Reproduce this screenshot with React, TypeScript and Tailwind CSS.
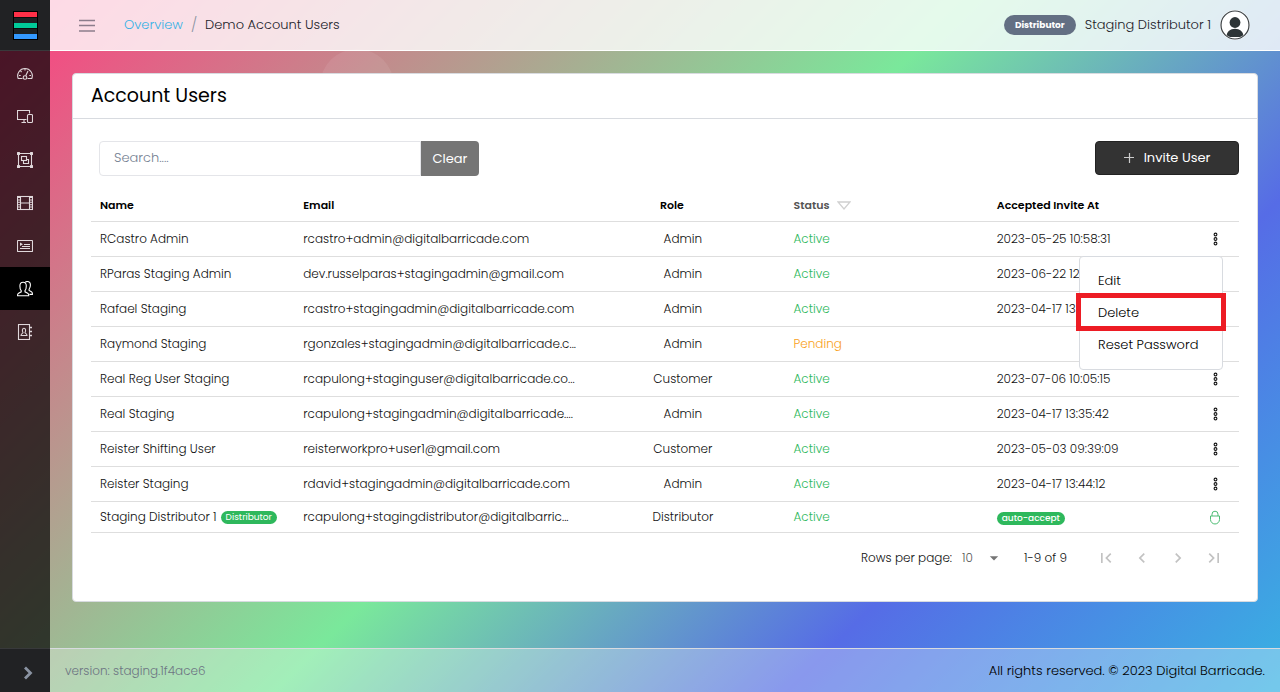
import { useState } from "react";
import type { ReactNode } from "react";
import {
  MdArrowDropDown,
  MdChevronLeft,
  MdChevronRight,
  MdFirstPage,
  MdLastPage,
} from "react-icons/md";

type User = {
  name: string;
  badge?: string;
  email: string;
  role: string;
  status: "Active" | "Pending";
  accepted?: string;
  autoAccept?: boolean;
};

const users: User[] = [
  { name: "RCastro Admin", email: "rcastro+admin@digitalbarricade.com", role: "Admin", status: "Active", accepted: "2023-05-25 10:58:31" },
  { name: "RParas Staging Admin", email: "dev.russelparas+stagingadmin@gmail.com", role: "Admin", status: "Active", accepted: "2023-06-22 12" },
  { name: "Rafael Staging", email: "rcastro+stagingadmin@digitalbarricade.com", role: "Admin", status: "Active", accepted: "2023-04-17 13" },
  { name: "Raymond Staging", email: "rgonzales+stagingadmin@digitalbarricade.c...", role: "Admin", status: "Pending" },
  { name: "Real Reg User Staging", email: "rcapulong+staginguser@digitalbarricade.co...", role: "Customer", status: "Active", accepted: "2023-07-06 10:05:15" },
  { name: "Real Staging", email: "rcapulong+stagingadmin@digitalbarricade....", role: "Admin", status: "Active", accepted: "2023-04-17 13:35:42" },
  { name: "Reister Shifting User", email: "reisterworkpro+user1@gmail.com", role: "Customer", status: "Active", accepted: "2023-05-03 09:39:09" },
  { name: "Reister Staging", email: "rdavid+stagingadmin@digitalbarricade.com", role: "Admin", status: "Active", accepted: "2023-04-17 13:44:12" },
  { name: "Staging Distributor 1", badge: "Distributor", email: "rcapulong+stagingdistributor@digitalbarric...", role: "Distributor", status: "Active", autoAccept: true },
];

function Glyph({ children }: { children: ReactNode }) {
  return (
    <svg viewBox="0 0 16 16" className="size-4" fill="none" stroke="currentColor" strokeWidth="1.1" aria-hidden="true">
      {children}
    </svg>
  );
}

const navItems: { label: string; active?: boolean; icon: ReactNode }[] = [
  {
    label: "Dashboard",
    icon: (
      <Glyph>
        <path d="M5.500 12.500H1.200A7.300 7.300 0 1 1 14.800 12.500H10.500" />
        <circle cx="8" cy="11.500" r="1.800" />
        <path d="M8.700 9.800 11 5M8 2.800v1.700M3.600 5l1 1M2 9.500h1.700M12.300 9.500H14" />
      </Glyph>
    ),
  },
  {
    label: "Devices",
    icon: (
      <Glyph>
        <path d="M9.500 10.500H.5v-9h12v3M4.500 13.500H9M7 10.500v3" />
        <rect x="10.500" y="5.500" width="5" height="8" rx="1" />
      </Glyph>
    ),
  },
  {
    label: "Groups",
    icon: (
      <Glyph>
        <path d="M2.500 1.500h11M2.500 14.500h11M1.500 2.500v11M14.500 2.500v11" />
        <g fill="currentColor" stroke="none">
          <rect x="0" y="0" width="3" height="3" rx=".5" />
          <rect x="13" y="0" width="3" height="3" rx=".5" />
          <rect x="0" y="13" width="3" height="3" rx=".5" />
          <rect x="13" y="13" width="3" height="3" rx=".5" />
        </g>
        <rect x="4.500" y="4.500" width="5" height="4" />
        <path d="M9.500 7.500h2v4h-5v-3" />
      </Glyph>
    ),
  },
  {
    label: "Media",
    icon: (
      <Glyph>
        <rect x=".5" y="1.500" width="15" height="13" />
        <path d="M3.500 1.500v13M12.500 1.500v13M3.500 8h9" />
        <path d="M2 2v12M14 2v12" strokeWidth="2" strokeDasharray="1 1.400" />
      </Glyph>
    ),
  },
  {
    label: "Playlists",
    icon: (
      <Glyph>
        <rect x=".5" y="2.500" width="15" height="11" rx=".5" />
        <path d="M3 4.500v3.600L6 6.300z" fill="currentColor" stroke="none" />
        <path d="M7 6.500h6M5 8.500h8M3 10.500h10" />
      </Glyph>
    ),
  },
  {
    label: "Users",
    active: true,
    icon: (
      <Glyph>
        <path d="M4.200 9.600C3.200 8.300 2.900 6.600 2.900 4.900 2.900 2.600 4.200 1.200 6.100 1.200S9.300 2.600 9.300 4.900c0 1.700-.3 3.400-1.300 4.700v1.200l2.700 1.400c.7.400 1 .9 1 1.600v1H.6v-1c0-.7.3-1.200 1-1.600l2.600-1.400z" />
        <path d="M8.300 1.200C9 .7 9.600.5 10.300.5c1.900 0 3.100 1.300 3.100 3.500 0 1.700-.4 3-1.300 4.300v1.200l2.300 1.300c.7.400 1 .9 1 1.600v1h-3" />
      </Glyph>
    ),
  },
  {
    label: "Contacts",
    icon: (
      <Glyph>
        <rect x="1.500" y=".5" width="11" height="15" />
        <path d="M12 3.500h3M12 7.500h3M12 11.500h3" strokeWidth="1.600" />
        <path d="M6 8.500C5 7 5.200 4.300 7 4.300S9 7 8 8.500c0 1 2 .8 2 3H4c0-2.200 2-2 2-3z" />
      </Glyph>
    ),
  },
];

function Sidebar() {
  return (
    <aside className="flex w-[50px] shrink-0 flex-col bg-black/70">
      <a href="#home" aria-label="Digital Barricade home" className="flex h-[51px] items-center justify-center border-b border-[#38393b] bg-[#212224]">
        <svg viewBox="0 0 25 29" className="h-[29px] w-[25px]" aria-hidden="true">
          <rect width="25" height="29" fill="#000" />
          <rect x="1" y="1" width="23" height="27" fill="#1c2224" />
          <rect x="1" y="1" width="23" height="5" fill="#ff3048" />
          <rect x="1" y="6" width="23" height="1" fill="#0c0c0c" />
          <rect x="1" y="12" width="23" height="5" fill="#00cb99" />
          <rect x="1" y="17" width="23" height="1" fill="#0c0c0c" />
          <rect x="1" y="23" width="23" height="5" fill="#3399ff" />
        </svg>
      </a>
      <nav className="flex flex-1 flex-col pt-px text-[#e0d8db]">
        {navItems.map((item) => (
          <a
            key={item.label}
            href={"#" + item.label.toLowerCase()}
            aria-label={item.label}
            className={
              item.active
                ? "flex h-[43px] items-center justify-center bg-black text-white"
                : "flex h-[43px] items-center justify-center"
            }
          >
            {item.icon}
          </a>
        ))}
      </nav>
      <button type="button" aria-label="Expand sidebar" className="flex h-11 items-center justify-center border-t border-[#38393b] bg-[#212224] pl-1.5 pt-1">
        <svg viewBox="0 0 10 14" className="h-3.5 w-2.5" fill="none" stroke="#8a93a2" strokeWidth="2.800" aria-hidden="true">
          <path d="M2 1.500 7.500 7 2 12.500" />
        </svg>
      </button>
    </aside>
  );
}

function Header() {
  return (
    <header className="flex h-[51px] items-center border-b border-white bg-white/80 pl-[29px] pr-[30px]">
      <button type="button" aria-label="Toggle menu" className="mr-[29px]">
        <svg viewBox="0 0 16 14" className="h-3.5 w-4" stroke="#8c7d8c" strokeWidth="1.300" aria-hidden="true">
          <path d="M0 2.500h16M0 7.500h16M0 13h16" />
        </svg>
      </button>
      <nav aria-label="Breadcrumb" className="flex items-center gap-2 text-[13px]">
        <a href="#overview" className="text-[#39b2e5]">Overview</a>
        <span className="text-sm text-[#8a93a2]">/</span>
        <span className="text-[#22222a]">Demo Account Users</span>
      </nav>
      <div className="ml-auto flex items-center gap-[9px]">
        <span className="rounded-full bg-[#636f83] px-[11px] text-[9px] font-bold leading-5 text-white">Distributor</span>
        <span className="text-[13px] text-[#22222a]">Staging Distributor 1</span>
        <svg viewBox="0 0 30 30" className="size-[30px]" aria-hidden="true">
          <defs>
            <clipPath id="face"><circle cx="15" cy="15" r="13" /></clipPath>
          </defs>
          <circle cx="15" cy="15" r="15" fill="#fff" />
          <circle cx="15" cy="15" r="14" fill="#fff" stroke="#3b4043" strokeWidth="1.200" />
          <g clipPath="url(#face)" fill="#2d3436">
            <circle cx="15" cy="12.500" r="5.400" />
            <path d="M6.500 27c0-5.500 3.800-8.200 8.500-8.200s8.500 2.700 8.500 8.200z" />
          </g>
        </svg>
      </div>
    </header>
  );
}

function Dots() {
  return (
    <svg viewBox="0 0 5 15" className="h-[15px] w-[5px]" fill="none" stroke="#111" strokeWidth="1.100" aria-hidden="true">
      <circle cx="2.500" cy="2.500" r="1.400" />
      <circle cx="2.500" cy="7" r="1.400" />
      <circle cx="2.500" cy="11.500" r="1.400" />
    </svg>
  );
}

function RowMenu() {
  return (
    <ul className="absolute right-4 top-full z-10 w-36 rounded border border-[#d8dbe0] bg-white py-2 text-[13px] text-black">
      <li>
        <button type="button" className="block h-8 w-full px-[18px] text-left">Edit</button>
      </li>
      <li className="relative">
        <button type="button" className="block h-8 w-full px-[18px] text-left">Delete</button>
        <span className="pointer-events-none absolute -inset-x-1 -bottom-0.5 -top-1 border-[5px] border-[#ed1c24]" />
      </li>
      <li>
        <button type="button" className="block h-8 w-full px-[18px] text-left">Reset Password</button>
      </li>
    </ul>
  );
}

function UsersTable() {
  const [openRow] = useState(0);
  return (
    <table className="w-full table-fixed border-separate border-spacing-0 text-left text-xs text-[#111]">
      <colgroup>
        <col />
        <col className="w-1/4" />
        <col />
        <col />
        <col />
        <col className="w-12" />
      </colgroup>
      <thead>
        <tr className="h-8 text-[11px] text-black [&>th]:border-b [&>th]:border-[#dedede] [&>th]:px-[9px] [&>th]:font-semibold">
          <th scope="col">Name</th>
          <th scope="col">Email</th>
          <th scope="col" className="text-center"><span className="pr-[22px]">Role</span></th>
          <th scope="col" className="text-[#555]">
            <button type="button" className="flex items-center gap-2 font-semibold">
              Status
              <svg viewBox="0 0 14 9" className="h-[9px] w-3.5" fill="none" stroke="#d0d0d0" strokeWidth="1.300" aria-hidden="true">
                <path d="M1 1h12L7 8z" />
              </svg>
            </button>
          </th>
          <th scope="col">Accepted Invite At</th>
          <th aria-label="Actions" />
        </tr>
      </thead>
      <tbody>
        {users.map((user, index) => (
          <tr
            key={user.name}
            className={
              user.autoAccept
                ? "h-[31px] [&>td]:border-b [&>td]:border-[#dedede] [&>td]:px-[9px]"
                : "h-[35px] [&>td]:border-b [&>td]:border-[#dedede] [&>td]:px-[9px]"
            }
          >
            <td className="whitespace-nowrap">
              <span className="flex items-center gap-1">
                {user.name}
                {user.badge && (
                  <span className="rounded-full bg-[#2eb85c] px-[5px] text-[9px] font-normal leading-[13px] text-white">{user.badge}</span>
                )}
              </span>
            </td>
            <td className="whitespace-nowrap">{user.email}</td>
            <td className="text-center">{user.role}</td>
            <td className={user.status === "Active" ? "text-[#2eb85c]" : "text-[#f9a11c]"}>{user.status}</td>
            <td className="whitespace-nowrap">
              {user.autoAccept ? (
                <span className="inline-block rounded-full bg-[#2eb85c] px-[5px] text-[9px] font-medium leading-[13px] text-white">auto-accept</span>
              ) : (
                user.accepted
              )}
            </td>
            <td className="relative">
              {user.autoAccept ? (
                <svg viewBox="0 0 12 15" className="mx-auto h-[15px] w-3" fill="none" stroke="#4dbd74" strokeWidth="1" aria-label="Locked">
                  <path d="M3 6V4.200a3 3 0 0 1 6 0V6M1.500 6h9v3.500a4.500 4.500 0 0 1-9 0z" />
                </svg>
              ) : (
                <button type="button" aria-label={"Actions for " + user.name} className="mx-auto flex w-5 justify-center">
                  <Dots />
                </button>
              )}
              {index === openRow && <RowMenu />}
            </td>
          </tr>
        ))}
      </tbody>
    </table>
  );
}

function Pagination() {
  return (
    <div className="flex h-[50px] items-center justify-end pr-[7px] text-xs text-[#111]">
      <label htmlFor="page-size">Rows per page:</label>
      <div className="relative ml-2.5 mr-[22px] flex items-center">
        <select id="page-size" defaultValue="10" className="w-10 appearance-none bg-transparent text-xs text-[#555]">
          <option>10</option>
          <option>25</option>
          <option>50</option>
        </select>
        <MdArrowDropDown className="pointer-events-none absolute -right-0.5 size-5 text-[#757575]" />
      </div>
      <span className="mr-[21px]">1-9 of 9</span>
      <div className="flex text-[#c2c2c2]">
        <button type="button" disabled aria-label="First page" className="flex w-9 justify-center"><MdFirstPage className="size-5" /></button>
        <button type="button" disabled aria-label="Previous page" className="flex w-9 justify-center"><MdChevronLeft className="size-5" /></button>
        <button type="button" disabled aria-label="Next page" className="flex w-9 justify-center"><MdChevronRight className="size-5" /></button>
        <button type="button" disabled aria-label="Last page" className="flex w-9 justify-center"><MdLastPage className="size-5" /></button>
      </div>
    </div>
  );
}

export default function App() {
  return (
    <div className="relative isolate flex min-h-screen bg-[linear-gradient(135deg,#ff3d80_0%,#7ae89b_49%,#566ce6_75%,#38b2e2_100%)] font-[Poppins,Inter,sans-serif] font-light">
      <div className="absolute left-80 top-[49px] -z-10 size-[74px] rounded-full bg-white/8" />
      <Sidebar />
      <div className="flex min-w-0 flex-1 flex-col">
        <Header />
        <main className="flex-1 p-[22px]">
          <section className="rounded border border-[#d8dbe0] bg-white">
            <h1 className="border-b border-[#d8dbe0] px-[18px] text-[19px] font-normal leading-[44px] text-black">Account Users</h1>
            <div className="px-[18px] pb-[18px] pt-[22px]">
              <div className="mb-[14px] flex items-start justify-between pl-2">
                <div className="flex h-[35px] w-[380px]">
                  <input
                    type="text"
                    aria-label="Search users"
                    placeholder="Search...."
                    className="min-w-0 flex-1 rounded-l border border-[#e4e5e9] px-[14px] pb-0.5 text-[13px] placeholder:text-[#768192]"
                  />
                  <button type="button" className="w-[58px] rounded-r bg-[#757575] text-[13px] font-normal text-white">Clear</button>
                </div>
                <button type="button" className="flex h-[34px] w-36 items-center justify-center gap-2.5 rounded border border-[#222] bg-[#333] text-[13px] font-normal text-white">
                  <svg viewBox="0 0 10 10" className="size-2.5" stroke="#ccc" strokeWidth="1.200" aria-hidden="true">
                    <path d="M5.500 0v10M0 4.500h10" />
                  </svg>
                  Invite User
                </button>
              </div>
              <UsersTable />
              <Pagination />
            </div>
          </section>
        </main>
        <footer className="flex h-11 items-center justify-between border-t border-[#d8dbe0] bg-white/30 px-[15px] text-xs">
          <span className="text-[#6d7583]">version: staging.1f4ace6</span>
          <span className="text-[13px] text-black">All rights reserved. © 2023 Digital Barricade.</span>
        </footer>
      </div>
    </div>
  );
}
